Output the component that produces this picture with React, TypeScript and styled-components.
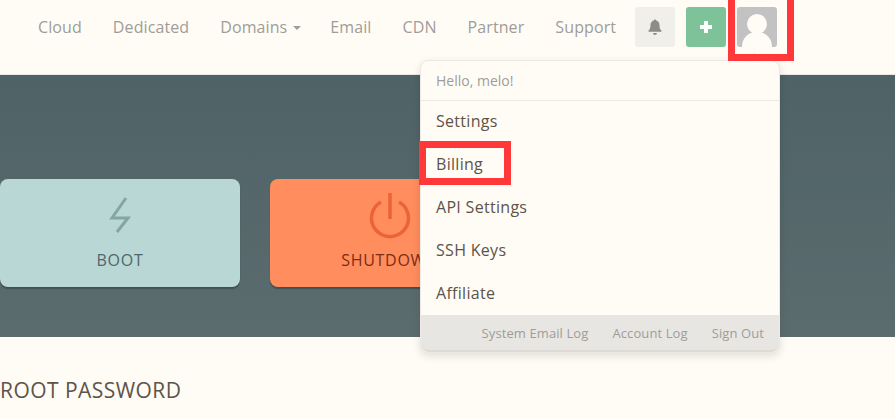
import { createGlobalStyle, styled } from "styled-components";

const GlobalStyle = createGlobalStyle`
  html, body {
    margin: 0;
    padding: 0;
    background: #fffcf6;
    overflow: hidden;
  }
  body {
    font-family: "Open Sans", "Liberation Sans", sans-serif;
  }
`;

const Page = styled.div`
  position: relative;
  width: 895px;
  height: 419px;
  overflow: hidden;
  background: #fffcf6;
`;

const Header = styled.header`
  height: 75px;
  box-sizing: border-box;
  padding: 7px 0 0 38px;
  display: flex;
  align-items: flex-start;
  border-bottom: 1px solid #ece9e2;
`;

const NavLink = styled.a`
  height: 40px;
  line-height: 40px;
  font-size: 16px;
  letter-spacing: 0.1px;
  color: #a09c98;
  margin-right: 31px;
  white-space: nowrap;
  display: flex;
  align-items: center;
`;

const Caret = styled.span`
  width: 0;
  height: 0;
  margin: 2px -2px 0 6px;
  border-left: 4px solid transparent;
  border-right: 4px solid transparent;
  border-top: 4px solid #a09c98;
`;

const NavActions = styled.div`
  display: flex;
  gap: 11px;
  margin-left: -12px;
`;

const IconButton = styled.button<{ $bg: string }>`
  width: 40px;
  height: 40px;
  padding: 0;
  border: 0;
  border-radius: 3px;
  background: ${(p) => p.$bg};
  display: flex;
  align-items: center;
  justify-content: center;
  overflow: hidden;
`;

const Hero = styled.section`
  height: 262px;
  box-sizing: border-box;
  padding-top: 104px;
  background: linear-gradient(180deg, #4f6265 0%, #5b6c6f 100%);
  display: flex;
  gap: 30px;
`;

const ActionCard = styled.div<{ $bg: string; $color: string }>`
  width: 240px;
  height: 108px;
  box-sizing: border-box;
  padding-top: 14px;
  border-radius: 8px;
  background: ${(p) => p.$bg};
  color: ${(p) => p.$color};
  box-shadow: 0 2px 1px rgba(0, 0, 0, 0.25);
  display: flex;
  flex-direction: column;
  align-items: center;
  font-size: 16px;
  text-transform: uppercase;
  letter-spacing: 0.7px;
`;

const CardIcon = styled.svg`
  width: 48px;
  height: 48px;
  margin-bottom: 8px;
`;

const SectionTitle = styled.h2`
  margin: 41px 0 0;
  font-size: 21px;
  line-height: 24px;
  font-weight: 400;
  letter-spacing: 0.45px;
  color: #5e5348;
  text-transform: uppercase;
`;

const Menu = styled.div`
  position: absolute;
  left: 420px;
  top: 60px;
  width: 360px;
  box-sizing: border-box;
  background: #fffcf6;
  border: 1px solid #ece9e2;
  border-radius: 8px;
  box-shadow: 0 3px 8px rgba(0, 0, 0, 0.12);

  &::before {
    content: "";
    position: absolute;
    right: 19px;
    top: -6px;
    width: 10px;
    height: 10px;
    background: #fffcf6;
    transform: rotate(45deg);
    border-left: 1px solid #ece9e2;
    border-top: 1px solid #ece9e2;
  }
`;

const Greeting = styled.div`
  height: 39px;
  line-height: 39px;
  padding-left: 15px;
  font-size: 14px;
  color: #a09c98;
  border-bottom: 1px solid #ece9e2;
`;

const MenuList = styled.div`
  padding: 0 15px;
  margin-top: -1px;
  display: flex;
  flex-direction: column;
`;

const MenuItem = styled.a`
  height: 43px;
  line-height: 43px;
  font-size: 16px;
  letter-spacing: 0.3px;
  color: #5e5348;
`;

const MenuFooter = styled.div`
  height: 37px;
  display: flex;
  justify-content: flex-end;
  align-items: center;
  gap: 24px;
  padding-right: 15px;
  font-size: 13px;
  letter-spacing: 0.1px;
  color: #a09c98;
  background: #e8e6e3;
  border-radius: 0 0 8px 8px;
  border-bottom: 2px solid #dedbd6;
  box-sizing: border-box;
`;

const Highlight = styled.div<{ $l: number; $t: number; $w: number; $h: number }>`
  position: absolute;
  left: ${(p) => p.$l}px;
  top: ${(p) => p.$t}px;
  width: ${(p) => p.$w}px;
  height: ${(p) => p.$h}px;
  box-sizing: border-box;
  border: 7px solid #ff3939;
`;

export default function App() {
  return (
    <Page>
      <GlobalStyle />
      <Header>
        <NavLink>Cloud</NavLink>
        <NavLink>Dedicated</NavLink>
        <NavLink>
          Domains
          <Caret />
        </NavLink>
        <NavLink>Email</NavLink>
        <NavLink>CDN</NavLink>
        <NavLink>Partner</NavLink>
        <NavLink>Support</NavLink>
        <NavActions>
          <IconButton $bg="#f1efea">
            <svg width="18" height="18" viewBox="0 0 18 18" fill="#8f8c88">
              <path d="M9 1.500c.7 0 1.200.5 1.200 1.100 2.200.5 3.300 2.300 3.300 4.600 0 3 .8 4.300 2 5.600v1H2.500v-1c1.200-1.300 2-2.600 2-5.600 0-2.300 1.100-4.100 3.300-4.600C7.800 2 8.300 1.500 9 1.500z" />
              <path d="M7 15h4c0 1.200-.9 2-2 2s-2-.8-2-2z" />
            </svg>
          </IconButton>
          <IconButton $bg="#7ec29a">
            <svg width="14" height="14" viewBox="0 0 14 14" fill="#fff">
              <path d="M5 1h4v4h4v4H9v4H5V9H1V5h4z" />
            </svg>
          </IconButton>
          <IconButton $bg="#c2c2c2">
            <svg width="40" height="40" viewBox="0 0 40 40" fill="#fffcf6">
              <circle cx="20" cy="17" r="10" />
              <path d="M5 40c0-9 6-15 15-15s15 6 15 15z" />
            </svg>
          </IconButton>
        </NavActions>
      </Header>
      <Hero>
        <ActionCard $bg="#b8d7d5" $color="#52666b">
          <CardIcon viewBox="0 0 48 48" fill="none" stroke="#84a5a6" strokeWidth="3">
            <path d="M30 5 L16 25 H32 L21 39" />
          </CardIcon>
          Boot
        </ActionCard>
        <ActionCard $bg="#ff8d5e" $color="#7a2e14">
          <CardIcon viewBox="0 0 48 48" fill="none" stroke="#eb6337" strokeWidth="3.500">
            <path d="M15 9a18.500 18.500 0 1 0 18 0" />
            <path d="M24 0v26" />
          </CardIcon>
          Shutdown
        </ActionCard>
      </Hero>
      <SectionTitle>Root Password</SectionTitle>
      <Menu>
        <Greeting>Hello, melo!</Greeting>
        <MenuList>
          <MenuItem>Settings</MenuItem>
          <MenuItem>Billing</MenuItem>
          <MenuItem>API Settings</MenuItem>
          <MenuItem>SSH Keys</MenuItem>
          <MenuItem>Affiliate</MenuItem>
        </MenuList>
        <MenuFooter>
          <span>System Email Log</span>
          <span>Account Log</span>
          <span>Sign Out</span>
        </MenuFooter>
      </Menu>
      <Highlight $l={728} $t={-10} $w={66} $h={71} />
      <Highlight $l={419} $t={141} $w={92} $h={44} />
    </Page>
  );
}
